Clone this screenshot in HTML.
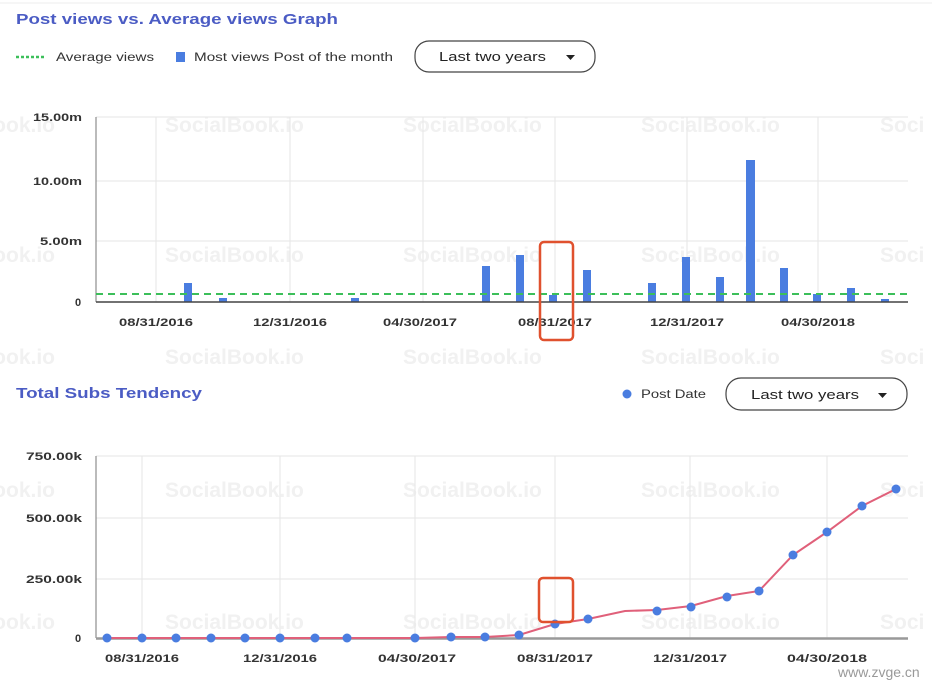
<!DOCTYPE html>
<html><head><meta charset="utf-8"><style>
html,body{margin:0;padding:0;background:#fff;width:932px;height:680px;overflow:hidden}
svg{display:block}
text{font-family:"Liberation Sans",sans-serif}
.wm{font-size:21px;font-weight:bold;fill:#f1f1f1}
.ax{font-size:11px;font-weight:bold;fill:#333}
.lg{font-size:11.5px;fill:#333}
.ttl{font-size:15px;font-weight:bold;fill:#4b5cc4}
</style></head><body>
<svg width="932" height="680" viewBox="0 0 932 680">
<line x1="0" y1="3" x2="932" y2="3" stroke="#eee" stroke-width="1"/>
<g class="wm">
<text x="-22" y="132">Book.io</text><text x="165" y="132">SocialBook.io</text><text x="403" y="132">SocialBook.io</text><text x="641" y="132">SocialBook.io</text><text x="880" y="132">Soci</text>
<text x="-22" y="262">Book.io</text><text x="165" y="262">SocialBook.io</text><text x="403" y="262">SocialBook.io</text><text x="641" y="262">SocialBook.io</text><text x="880" y="262">Soci</text>
<text x="-22" y="364">Book.io</text><text x="165" y="364">SocialBook.io</text><text x="403" y="364">SocialBook.io</text><text x="641" y="364">SocialBook.io</text><text x="880" y="364">Soci</text>
<text x="-22" y="497">Book.io</text><text x="165" y="497">SocialBook.io</text><text x="403" y="497">SocialBook.io</text><text x="641" y="497">SocialBook.io</text><text x="880" y="497">Soci</text>
<text x="-22" y="629">Book.io</text><text x="165" y="629">SocialBook.io</text><text x="403" y="629">SocialBook.io</text><text x="641" y="629">SocialBook.io</text><text x="880" y="629">Soci</text>
</g>
<text class="ttl" x="16" y="24" textLength="322" lengthAdjust="spacingAndGlyphs">Post views vs. Average views Graph</text>
<line x1="16" y1="57" x2="46" y2="57" stroke="#3cbf5a" stroke-width="2.5" stroke-dasharray="3,2"/>
<text class="lg" x="56" y="61" textLength="98" lengthAdjust="spacingAndGlyphs">Average views</text>
<rect x="176" y="52" width="9" height="10" fill="#4a7de0"/>
<text class="lg" x="194" y="61" textLength="199" lengthAdjust="spacingAndGlyphs">Most views Post of the month</text>
<rect x="415" y="41" width="180" height="31" rx="14" fill="#fff" stroke="#444" stroke-width="1.2"/>
<text x="439" y="61" style="font-size:13px;fill:#222" textLength="107" lengthAdjust="spacingAndGlyphs">Last two years</text>
<path d="M566 55 L575 55 L570.5 60 Z" fill="#222"/>
<g stroke="#e6e6e6" stroke-width="1">
<line x1="96" y1="117" x2="908" y2="117"/><line x1="96" y1="181" x2="908" y2="181"/><line x1="96" y1="241" x2="908" y2="241"/>
<line x1="156" y1="117" x2="156" y2="302"/><line x1="290" y1="117" x2="290" y2="302"/><line x1="423" y1="117" x2="423" y2="302"/><line x1="555" y1="117" x2="555" y2="302"/><line x1="687" y1="117" x2="687" y2="302"/><line x1="818" y1="117" x2="818" y2="302"/>
</g>
<line x1="96" y1="117" x2="96" y2="302" stroke="#777" stroke-width="1"/>
<g class="ax"><text x="33" y="121" textLength="49" lengthAdjust="spacingAndGlyphs">15.00m</text><text x="33" y="185" textLength="49" lengthAdjust="spacingAndGlyphs">10.00m</text><text x="40" y="245" textLength="42" lengthAdjust="spacingAndGlyphs">5.00m</text><text x="75" y="306">0</text></g>
<g fill="#4a7de0">
<rect x="184" y="283" width="8" height="19"/><rect x="219" y="298" width="8" height="4"/><rect x="351" y="298" width="8" height="4"/>
<rect x="482" y="266" width="8" height="36"/><rect x="516" y="255" width="8" height="47"/><rect x="549" y="295" width="8" height="7"/>
<rect x="583" y="270" width="8" height="32"/><rect x="648" y="283" width="8" height="19"/><rect x="682" y="257" width="8" height="45"/>
<rect x="716" y="277" width="8" height="25"/><rect x="746" y="160" width="9" height="142"/><rect x="780" y="268" width="8" height="34"/>
<rect x="813" y="294" width="8" height="8"/><rect x="847" y="288" width="8" height="14"/><rect x="881" y="299" width="8" height="3"/>
</g>
<line x1="96" y1="294" x2="908" y2="294" stroke="#3cbf5a" stroke-width="2" stroke-dasharray="7,5"/>
<line x1="96" y1="302" x2="908" y2="302" stroke="#444" stroke-width="1.5"/>
<g class="ax" text-anchor="middle"><text x="156" y="326" textLength="74" lengthAdjust="spacingAndGlyphs">08/31/2016</text><text x="290" y="326" textLength="74" lengthAdjust="spacingAndGlyphs">12/31/2016</text><text x="420" y="326" textLength="74" lengthAdjust="spacingAndGlyphs">04/30/2017</text><text x="555" y="326" textLength="74" lengthAdjust="spacingAndGlyphs">08/31/2017</text><text x="687" y="326" textLength="74" lengthAdjust="spacingAndGlyphs">12/31/2017</text><text x="818" y="326" textLength="74" lengthAdjust="spacingAndGlyphs">04/30/2018</text></g>
<rect x="540" y="242" width="33" height="98" rx="4" fill="none" stroke="#e0512e" stroke-width="2.5"/>
<text class="ttl" x="16" y="398" textLength="186" lengthAdjust="spacingAndGlyphs">Total Subs Tendency</text>
<circle cx="627" cy="394" r="4.5" fill="#4a7de0"/>
<text class="lg" x="641" y="398" textLength="65" lengthAdjust="spacingAndGlyphs">Post Date</text>
<rect x="726" y="378" width="181" height="32" rx="15" fill="#fff" stroke="#444" stroke-width="1.2"/>
<text x="751" y="399" style="font-size:13px;fill:#222" textLength="108" lengthAdjust="spacingAndGlyphs">Last two years</text>
<path d="M878 393 L887 393 L882.5 398 Z" fill="#222"/>
<g stroke="#e6e6e6" stroke-width="1">
<line x1="96" y1="456" x2="908" y2="456"/><line x1="96" y1="518" x2="908" y2="518"/><line x1="96" y1="579" x2="908" y2="579"/>
<line x1="142" y1="456" x2="142" y2="638"/><line x1="280" y1="456" x2="280" y2="638"/><line x1="415" y1="456" x2="415" y2="638"/><line x1="555" y1="456" x2="555" y2="638"/><line x1="690" y1="456" x2="690" y2="638"/><line x1="827" y1="456" x2="827" y2="638"/>
</g>
<line x1="96" y1="456" x2="96" y2="638" stroke="#777" stroke-width="1"/>
<g class="ax"><text x="26" y="460" textLength="56" lengthAdjust="spacingAndGlyphs">750.00k</text><text x="26" y="522" textLength="56" lengthAdjust="spacingAndGlyphs">500.00k</text><text x="26" y="583" textLength="56" lengthAdjust="spacingAndGlyphs">250.00k</text><text x="75" y="642">0</text></g>
<line x1="96" y1="638.5" x2="908" y2="638.5" stroke="#999" stroke-width="2.5"/>
<polyline fill="none" stroke="#e0607a" stroke-width="2" points="107,638 142,638 176,638 211,638 245,638 280,638 315,638 347,638 415,638 451,637 485,637 519,635 555,624 588,619 625,611 657,610 691,606 727,596 759,591 793,555 827,532 862,506 896,489"/>
<g fill="#4a7de0">
<circle cx="107" cy="638" r="4.5"/><circle cx="142" cy="638" r="4.5"/><circle cx="176" cy="638" r="4.5"/><circle cx="211" cy="638" r="4.5"/><circle cx="245" cy="638" r="4.5"/><circle cx="280" cy="638" r="4.5"/><circle cx="315" cy="638" r="4.5"/><circle cx="347" cy="638" r="4.5"/><circle cx="415" cy="638" r="4.5"/><circle cx="451" cy="637" r="4.5"/><circle cx="485" cy="637" r="4.5"/><circle cx="519" cy="635" r="4.5"/><circle cx="555" cy="624" r="4.5"/><circle cx="588" cy="619" r="4.5"/><circle cx="657" cy="611" r="4.5"/><circle cx="691" cy="607" r="4.5"/><circle cx="727" cy="597" r="4.5"/><circle cx="759" cy="591" r="4.5"/><circle cx="793" cy="555" r="4.5"/><circle cx="827" cy="532" r="4.5"/><circle cx="862" cy="506" r="4.5"/><circle cx="896" cy="489" r="4.5"/>
</g>
<g class="ax" text-anchor="middle"><text x="142" y="662" textLength="74" lengthAdjust="spacingAndGlyphs">08/31/2016</text><text x="280" y="662" textLength="74" lengthAdjust="spacingAndGlyphs">12/31/2016</text><text x="417" y="662" textLength="78" lengthAdjust="spacingAndGlyphs">04/30/2017</text><text x="555" y="662" textLength="76" lengthAdjust="spacingAndGlyphs">08/31/2017</text><text x="690" y="662" textLength="74" lengthAdjust="spacingAndGlyphs">12/31/2017</text><text x="827" y="662" textLength="80" lengthAdjust="spacingAndGlyphs">04/30/2018</text></g>
<rect x="539" y="578" width="34" height="44" rx="4" fill="none" stroke="#e0512e" stroke-width="2.5"/>
<text x="838" y="677" style="font-size:14px;fill:#999">www.zvge.cn</text>
</svg>
</body></html>
